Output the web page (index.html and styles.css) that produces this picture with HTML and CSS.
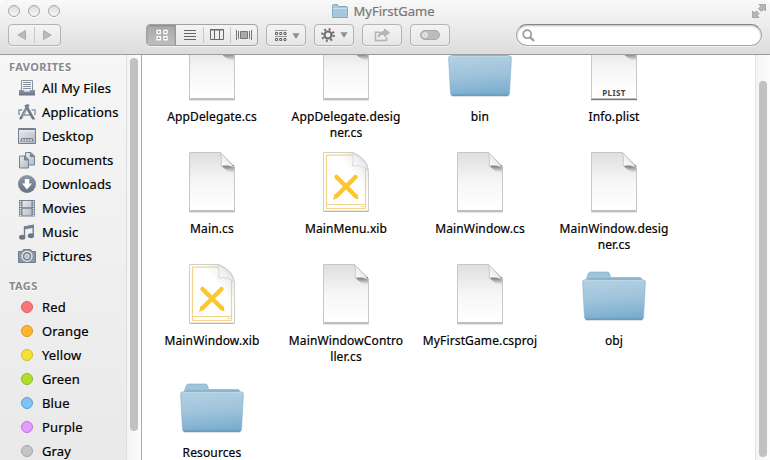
FILE: index.html
```html
<!DOCTYPE html>
<html lang="en">
<head>
<meta charset="utf-8">
<title>MyFirstGame</title>
<link rel="stylesheet" href="styles.css">
</head>
<body>
<svg class="defs" width="0" height="0" aria-hidden="true">
  <defs>
    <linearGradient id="paper" x1="0" y1="0" x2="0" y2="1"><stop offset="0" stop-color="#dedede"/><stop offset=".5" stop-color="#f6f6f6"/><stop offset="1" stop-color="#fff"/></linearGradient>
    <linearGradient id="white" x1="1" y1="0" x2=".4" y2=".6"><stop offset="0" stop-color="#ddd"/><stop offset=".6" stop-color="#fff"/></linearGradient>
    <linearGradient id="fold" x1="0" y1="1" x2="1" y2="0"><stop offset="0" stop-color="#fff"/><stop offset=".5" stop-color="#eee"/><stop offset="1" stop-color="#ccc"/></linearGradient>
    <linearGradient id="shade" x1="0" y1="0" x2="0" y2="1"><stop offset="0" stop-color="#444" stop-opacity=".85"/><stop offset="1" stop-color="#888" stop-opacity="0"/></linearGradient>
    <linearGradient id="blue" x1=".35" y1="0" x2=".5" y2="1"><stop offset="0" stop-color="#b2d0e3"/><stop offset=".5" stop-color="#9fc3db"/><stop offset="1" stop-color="#79adcf"/></linearGradient>
    <linearGradient id="slate" x1="0" y1="0" x2="0" y2="1"><stop offset="0" stop-color="#8d98a5"/><stop offset="1" stop-color="#667484"/></linearGradient>
    <linearGradient id="pale" x1="0" y1="0" x2="1" y2="1"><stop offset="0" stop-color="#e8ebee"/><stop offset="1" stop-color="#b4bbc4"/></linearGradient>
  </defs>
  <symbol id="doc" viewBox="0 0 64 64">
    <path d="M9 61.800h46" stroke="#888" stroke-opacity=".4" stroke-width="1.400"/>
    <path d="M9.500 2.500H40.500L54.500 16.500V60.500H9.500Z" fill="url(#paper)" stroke="#c8c8c8"/>
    <path d="M9.500 61H54.500" stroke="#b0b0b0"/>
    <path d="M41 15H54V23Q46 22 41 15Z" fill="url(#shade)"/>
    <path d="M40.500 2.500Q42.500 9 41 16Q48 14.500 54.500 17.500Z" fill="url(#fold)" stroke="#bdbdbd" stroke-width=".7"/>
  </symbol>
  <symbol id="xib" viewBox="0 0 64 64">
    <path d="M9.500 2.500H39Q54.500 9 54.500 22V61H9.500Z" fill="url(#white)" stroke="#cfcfcf"/>
    <path d="M9.500 61.500H54.500" stroke="#b8b8b8"/>
    <path d="M38 5.200H12.500V58.500H51.500V17M12.500 54.500H51.500" fill="none" stroke="#f3d38c" stroke-width="1.200"/>
    <path d="M47 56.500h3" stroke="#f3d38c"/>
    <path d="M38 3Q40 10 38.500 16Q48 14.500 54 20Q52 8 38 3Z" fill="url(#fold)" stroke="#ccc" stroke-width=".7"/>
    <path d="M22.500 27L41.500 46M41.500 27L22.500 46" stroke="#fbc62f" stroke-width="4.500" stroke-linecap="round"/>
    <path d="M39.500 47.500L44.500 49.500L43.500 44ZM24.500 47.500L19 50L20.500 44Z" fill="#fbc62f"/>
  </symbol>
  <symbol id="folder" viewBox="0 0 64 64">
    <path d="M3.500 57.500H60.500" stroke="#627884" stroke-width="1.600" stroke-opacity=".85"/>
    <path d="M4 18L6.500 11Q7.500 10 9 10H26Q27.800 10 28.500 15.500H58Q60 15.500 60 19H4Z" fill="#9ec3da" stroke="#81abc5" stroke-width=".6"/>
    <path d="M6 17H59" stroke="#70a3c2" stroke-width="1"/>
    <path d="M.6 20Q.5 17.800 3 17.800H61Q63.500 17.800 63.400 20L61.500 55.500Q61.400 57 60 57H4Q2.600 57 2.500 55.500Z" fill="url(#blue)" stroke="#84b0cb" stroke-width=".6"/>
    <path d="M3 18.500H61" stroke="#c5dcea" stroke-width=".7"/>
    <path d="M3 56.300H61" stroke="#6c9ebc" stroke-width=".8"/>
  </symbol>
</svg>

<div class="window">
  <header class="chrome">
    <div class="titlebar">
      <div class="lights"><i></i><i></i><i></i></div>
      <h1 class="title">
        <svg width="16" height="14" viewBox="0 0 16 14"><path d="M.5 13.500V1.500Q.5.500 1.500.500H5.500L6.500 2.500H14.500Q15.500 2.500 15.500 4V13.500Z" fill="#a5c8de" stroke="#83abc5"/><path d="M1 4.500H15" stroke="#cae0ed"/></svg>
        <span>MyFirstGame</span>
      </h1>
      <svg class="full" width="14" height="14" viewBox="0 0 14 14" fill="#b7b7b7" stroke="#929292" stroke-width=".7"><path d="M7 .5H13.500V7L11.700 5.200L9.400 7.500L6.500 4.600L8.800 2.300Z"/><path d="M.5 7V13.500H7L5.200 11.700L7 9.500L4.500 7L2.300 8.800Z"/></svg>
    </div>
    <div class="toolbar">
      <div class="group nav">
        <span><svg width="9" height="10" viewBox="0 0 9 10"><path d="M8.500.5V9.500L.8 5Z" fill="#bbb" stroke="#9b9b9b" stroke-width=".7"/></svg></span>
        <span><svg width="9" height="10" viewBox="0 0 9 10"><path d="M.5.500V9.500L8.200 5Z" fill="#bbb" stroke="#9b9b9b" stroke-width=".7"/></svg></span>
      </div>
      <div class="group views">
        <span class="on"><svg width="12" height="12" viewBox="0 0 12 12" fill="#777" stroke="#fff" stroke-width="1.400"><path d="M1.200 1.500h3v3h-3zM8 1.500h3v3h-3zM1.200 7.800h3v3h-3zM8 7.800h3v3h-3z"/></svg></span>
        <span><svg width="12" height="12" viewBox="0 0 12 12"><path d="M0 1.500H12M0 4.500H12M0 7.500H12M0 10.500H12" stroke="#666"/></svg></span>
        <span><svg width="14" height="12" viewBox="0 0 14 12" fill="none" stroke="#6a6a6a"><path d="M.5.500H13.500V10.500H.5ZM4.500 1V10M9.500 1V10"/><path d="M0 1H14" stroke-width="1.200"/></svg></span>
        <span><svg width="16" height="12" viewBox="0 0 16 12"><path d="M.5 1V11M2.500 2V10M13.500 2V10M15.500 1V11" stroke="#777"/><path d="M4.500 2.500H11.500V9.500H4.500Z" fill="#aaa" stroke="#777"/></svg></span>
      </div>
      <div class="group btn">
        <svg width="12" height="12" viewBox="0 0 12 12" fill="none" stroke="#646464"><path d="M0 .5H12M0 6.500H12" stroke="#999"/><path d="M.5 2.500h2v2h-2zM4.700 2.500h2v2h-2zM9 2.500h2v2h-2zM.5 8.500h2v2h-2zM4.700 8.500h2v2h-2zM9 8.500h2v2h-2z"/></svg>
        <svg class="caret" width="8" height="6" viewBox="0 0 8 6"><path d="M.3.300H7.700L4 5.700Z" fill="#8f8f8f"/></svg>
      </div>
      <div class="group btn gear">
        <svg width="14" height="14" viewBox="-7 -7 14 14" fill="none" stroke="#6f6f6f"><circle r="3.500" stroke-width="2.200"/><circle r="5.800" stroke-width="2.300" stroke-dasharray="1.900 2.655"/></svg>
        <svg class="caret" width="8" height="6" viewBox="0 0 8 6"><path d="M.3.300H7.700L4 5.700Z" fill="#8f8f8f"/></svg>
      </div>
      <div class="group btn single">
        <svg width="16" height="14" viewBox="0 0 16 14"><path d="M6 4.200H1.500V12.500H12.500V9" fill="none" stroke="#b5b5b5" stroke-width="1.600"/><path d="M10.500 1L15.500 4.700L10.500 8.500V6.300Q6.500 6 4 9.300Q4.800 3.500 10.500 3.200Z" fill="#b7b7b7" stroke="#a8a8a8" stroke-width=".7"/></svg>
      </div>
      <div class="group btn single tag">
        <svg width="20" height="10" viewBox="0 0 20 10"><rect x=".5" y=".5" width="19" height="9" rx="4.500" fill="#bcbcbc" stroke="#a7a7a7"/><circle cx="5" cy="5" r="2.300" fill="#d5d5d5" stroke="#f4f4f4"/></svg>
      </div>
      <div class="search">
        <svg width="13" height="13" viewBox="0 0 13 13" fill="none" stroke="#999"><circle cx="5.200" cy="5.200" r="4" stroke-width="1.700"/><path d="M8.200 8.200L12 12" stroke-width="2.300"/></svg>
      </div>
    </div>
  </header>

  <div class="body">
    <aside class="sidebar">
      <nav class="places">
        <h2 class="fav">FAVORITES</h2>
        <ul>
          <li><svg viewBox="0 0 18 18"><path d="M3.500 11V1.500H14.500V11" fill="#f4f5f6" stroke="#8994a0"/><path d="M5 3.500H13M5 5.500H13M5 7.500H13M5 9.500H13" stroke="#8994a0"/><path d="M1 11.500H17L16 13.500H2Z" fill="#c5cbd1"/><path d="M1 11H5.500L6.500 13H11.500L12.500 11H17V16.500H1Z" fill="url(#slate)"/></svg><span>All My Files</span></li>
          <li><svg viewBox="0 0 18 18"><path d="M1 12V7H4.500M13.500 7H17V12M5 12H13" fill="none" stroke="#8e99a4" stroke-width="1.500"/><path d="M7.500 2L15.500 16" stroke="#6e7b89" stroke-width="2.600"/><path d="M10.500 1.500L2.500 15.800" stroke="#748290" stroke-width="2.600"/><path d="M8.500 6L4 14" stroke="#b5bdc5" stroke-width=".8"/><path d="M1.500 17L2 13.500L4 15ZM16.800 17.500L14 15L16 14Z" fill="#657382"/></svg><span>Applications</span></li>
          <li><svg viewBox="0 0 18 18"><path d="M.5 1.500H17.500V16.500H.5Z" fill="url(#pale)" stroke="#75818e"/><path d="M1 2.500H17" stroke="#75818e"/><path d="M1 4H17" stroke="#eef0f2"/><path d="M2 14.500L3.500 11H14.500L16 14.500Z" fill="#7b8794"/><path d="M4 13H14" stroke="#f0f2f3" stroke-width="1.600" stroke-dasharray="1.600 1.200"/></svg><span>Desktop</span></li>
          <li><svg viewBox="0 0 18 18"><path d="M7.500 1.500H13L16.500 5V14H7.500Z" fill="url(#pale)" stroke="#75818e"/><path d="M12.500 1.500V5.500H16.500" fill="#7b8794" stroke="#75818e"/><path d="M1.500 5H7L10.500 8.500V17H1.500Z" fill="url(#pale)" stroke="#75818e"/><path d="M6.500 5V9H10.500" fill="#7b8794" stroke="#75818e"/></svg><span>Documents</span></li>
          <li><svg viewBox="0 0 18 18"><circle cx="9" cy="9" r="9" fill="url(#slate)"/><path d="M6.800 4H11.200V8.500H14L9 14.500L4 8.500H6.800Z" fill="#fff"/></svg><span>Downloads</span></li>
          <li><svg viewBox="0 0 18 18"><rect x="1" y="1" width="16" height="16.500" fill="#74808d"/><path d="M2.500 2V17M15.500 2V17" stroke="#edf0f2" stroke-width="1.500" stroke-dasharray="1.300 1"/><path d="M4.500 2H13.500V8.300H4.500ZM4.500 9.800H13.500V16.500H4.500Z" fill="url(#pale)"/></svg><span>Movies</span></li>
          <li><svg viewBox="0 0 18 18"><path d="M6.500 14V4.200L15.200 2.500V12.500" fill="none" stroke="#6f7c8a" stroke-width="1.400"/><path d="M6 3.500L16 1.500V4.800L6 6.500Z" fill="#74818e"/><ellipse cx="4.200" cy="14.300" rx="3.200" ry="2.500" fill="#6a7886"/><ellipse cx="12.900" cy="12.700" rx="3.200" ry="2.500" fill="#6a7886"/></svg><span>Music</span></li>
          <li><svg viewBox="0 0 18 18"><path d="M.5 4.500H4L5.500 2.500H12.500L14 4.500H17.500V15.500H.5Z" fill="#8b96a2" stroke="#717e8b"/><circle cx="9" cy="9.300" r="5" fill="#7c8996" stroke="#e6e9ec" stroke-width="1.300"/><circle cx="9" cy="9.300" r="2.200" fill="#b4bdc5" stroke="#e5e9ec"/></svg><span>Pictures</span></li>
        </ul>
        <h2 class="tags">TAGS</h2>
        <ul>
          <li><i class="dot red"></i><span>Red</span></li>
          <li><i class="dot orange"></i><span>Orange</span></li>
          <li><i class="dot yellow"></i><span>Yellow</span></li>
          <li><i class="dot green"></i><span>Green</span></li>
          <li><i class="dot azure"></i><span>Blue</span></li>
          <li><i class="dot purple"></i><span>Purple</span></li>
          <li><i class="dot gray"></i><span>Gray</span></li>
        </ul>
      </nav>
      <div class="track"><div class="thumb"></div></div>
    </aside>

    <main class="files">
      <div class="grid">
        <div class="file"><svg><use href="#doc"/></svg><p>AppDelegate.cs</p></div>
        <div class="file"><svg><use href="#doc"/></svg><p>AppDelegate.desig<br>ner.cs</p></div>
        <div class="file"><svg><use href="#folder"/></svg><p>bin</p></div>
        <div class="file"><svg viewBox="0 0 64 64"><use href="#doc"/><path d="M10 48H54V60H10Z" fill="#fff" fill-opacity=".6"/><path d="M9 61.500H55" stroke="#777"/><text class="plist" x="32" y="58" text-anchor="middle">PLIST</text></svg><p>Info.plist</p></div>
        <div class="file"><svg><use href="#doc"/></svg><p>Main.cs</p></div>
        <div class="file"><svg><use href="#xib"/></svg><p>MainMenu.xib</p></div>
        <div class="file"><svg><use href="#doc"/></svg><p>MainWindow.cs</p></div>
        <div class="file"><svg><use href="#doc"/></svg><p>MainWindow.desig<br>ner.cs</p></div>
        <div class="file"><svg><use href="#xib"/></svg><p>MainWindow.xib</p></div>
        <div class="file"><svg><use href="#doc"/></svg><p>MainWindowContro<br>ller.cs</p></div>
        <div class="file"><svg><use href="#doc"/></svg><p>MyFirstGame.csproj</p></div>
        <div class="file"><svg><use href="#folder"/></svg><p>obj</p></div>
        <div class="file"><svg><use href="#folder"/></svg><p>Resources</p></div>
      </div>
    </main>
    <div class="track right"><div class="thumb"></div></div>
  </div>
</div>
</body>
</html>
```
FILE: styles.css
```css
* { box-sizing: border-box; }
body { margin: 0; background: #fff; color: #000; font-family: "Noto Sans", "Open Sans", sans-serif; }
h1, h2, p, ul { margin: 0; padding: 0; }
ul { list-style: none; }
.defs { position: absolute; }
.window { width: 770px; height: 460px; overflow: hidden; display: flex; flex-direction: column; border-radius: 5px 5px 0 0; }

.chrome { flex: none; height: 55px; border-bottom: 1px solid #9c9c9c; background: linear-gradient(#f9f9f9, #ededed 45%, #dcdcdc); }
.titlebar { height: 24px; padding: 4px 4px 0 8px; display: grid; grid-template-columns: 1fr auto 1fr; align-items: start; }
.lights { display: flex; gap: 8px; padding-top: 1px; }
.lights i { width: 12px; height: 12px; border: 1px solid #a5a5a5; border-radius: 50%; background: linear-gradient(#dedede, #f8f8f8); box-shadow: 0 1px 0 #fff; }
.title { display: flex; align-items: center; gap: 5px; height: 14px; margin-right: 7px; color: #777; font-size: 13px; font-weight: 400; line-height: 14px; -webkit-text-stroke: .2px #777; }
.title svg { display: block; }
.full { justify-self: end; }

.toolbar { display: flex; height: 22px; padding: 0 8px; }
.group { height: 22px; border: 1px solid #b4b4b4; border-radius: 4px; display: flex; align-items: center; box-shadow: 0 1px 0 #f3f3f3; background: linear-gradient(#f4f4f4, #e7e7e7); overflow: hidden; }
.group svg { display: block; }
.group span { height: 20px; display: flex; align-items: center; justify-content: center; }
.nav { width: 53px; margin-right: 85px; }
.nav span { flex: 1; }
.nav span + span { border-left: 1px solid #c8c8c8; background-clip: padding-box; height: 16px; }
.views { width: 112px; border-color: #a2a2a2; margin-right: 8px; }
.views span { width: 27px; height: 16px; }
.views span + span + span { border-left: 1px solid #c6c6c6; }
.views .on { width: 29px; height: 20px; padding-left: 2px; background: linear-gradient(#a8a8a8, #bebebe); border-right: 1px solid #999; box-shadow: inset 0 1px 2px #888; }
.btn { width: 40px; margin-right: 8px; padding: 1px 5px 0 8px; justify-content: space-between; }
.gear { padding-left: 6px; padding-top: 0; }
.single { justify-content: center; padding: 0; }
.tag { margin-right: 66px; }
.search { width: 246px; height: 22px; border: 1px solid #aaa; border-top-color: #858585; border-radius: 11px; background: #fff; box-shadow: inset 0 1px 2px #bbb, 0 1px 0 #efefef; padding: 4px 5px; }
.search svg { display: block; }

.body { flex: 1; min-height: 0; display: flex; }
.sidebar { width: 142px; display: flex; border-right: 1px solid #ababab; background: linear-gradient(#f6f6f6, #e9e9e9); }
.places { width: 127px; border-right: 1px solid #dedede; overflow: hidden; }
.places h2 { padding-left: 9px; color: #858a91; font-size: 11px; font-weight: 700; line-height: 16px; letter-spacing: .4px; text-shadow: 0 1px 0 #fff; }
.fav { padding-top: 4px; height: 21px; }
.places .tags { margin-top: 10px; height: 17px; letter-spacing: .4px; }
.places li { height: 24px; display: flex; align-items: center; padding-left: 18px; gap: 6px; font-size: 13px; line-height: 20px; letter-spacing: .15px; white-space: nowrap; -webkit-text-stroke: .2px #000; }
.places li svg { width: 18px; height: 18px; flex: none; }
.dot { width: 12px; height: 12px; margin: 0 3px; border: 1px solid; border-radius: 50%; flex: none; }
.red { background: #fb7777; border-color: #db5d5d; }
.orange { background: #ffb62e; border-color: #e4931c; }
.yellow { background: #f3e22f; border-color: #cfbd22; }
.green { background: #b0df26; border-color: #8eb92c; }
.azure { background: #7dc4fb; border-color: #599dce; }
.purple { background: #e39cff; border-color: #bf70e4; }
.gray { background: #c5c5c5; border-color: #a4a4a4; }

.track { width: 14px; padding: 3px 3px 0; background: linear-gradient(90deg, #f3f3f3, #fcfcfc); }
.thumb { width: 8px; height: 373px; border-radius: 4px; background: #c1c1c1; }
.files { width: 613px; overflow: hidden; background: #fff; }
.right { width: 15px; border-left: 1px solid #e3e3e3; padding-top: 26px; }
.right .thumb { height: 376px; }

.grid { display: grid; grid-template-columns: repeat(4, 134px); grid-auto-rows: 112px; margin: -17px 0 0 3px; }
.file { display: flex; flex-direction: column; align-items: center; }
.file svg { width: 64px; height: 64px; flex: none; }
.file p { margin-top: 7px; font-size: 12px; line-height: 16px; letter-spacing: .13px; text-align: center; white-space: nowrap; -webkit-text-stroke: .2px #000; }
.plist { font-size: 8px; font-weight: 700; letter-spacing: .4px; fill: #444; }
```
